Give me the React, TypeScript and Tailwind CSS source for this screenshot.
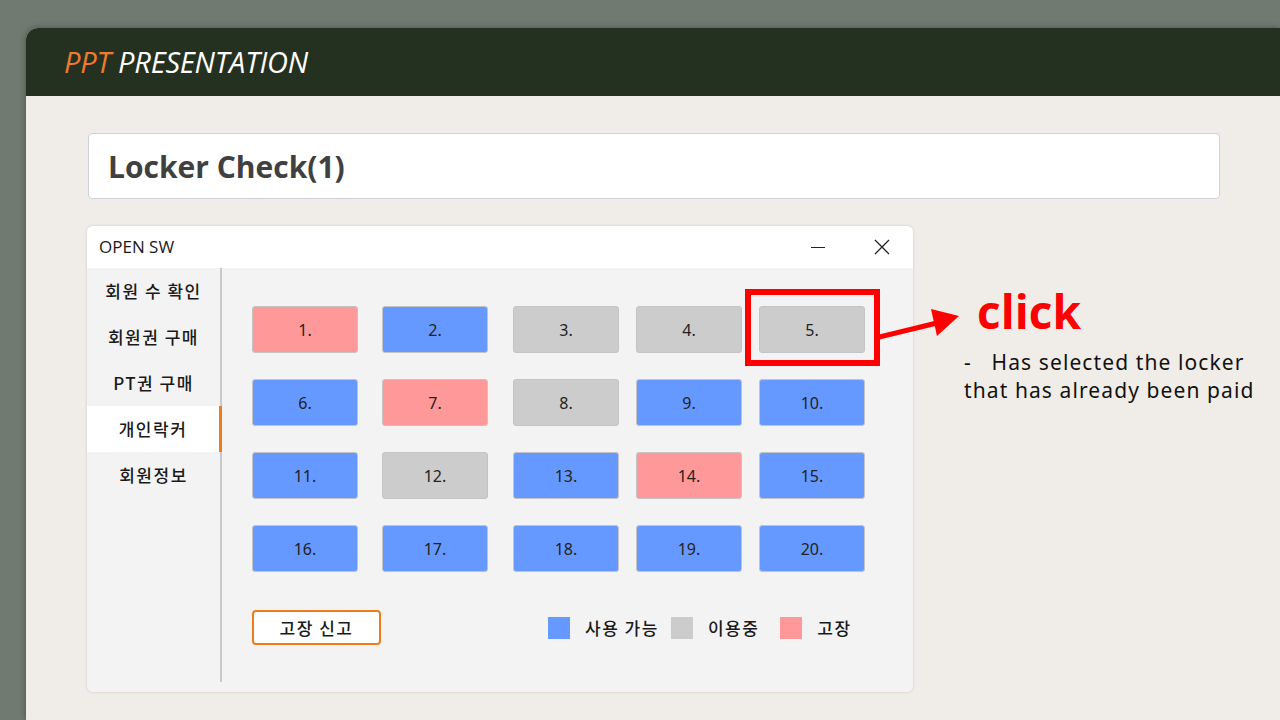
const KR = { fontFamily: '"Noto Sans CJK KR", "Noto Sans", sans-serif' };

type State = "free" | "used" | "broken";

const lockers: State[] = [
  "broken", "free", "used", "used", "used",
  "free", "broken", "used", "free", "free",
  "free", "used", "free", "broken", "free",
  "free", "free", "free", "free", "free",
];

const tone: Record<State, string> = {
  free: "bg-[#6699ff]",
  used: "bg-[#cccccc]",
  broken: "bg-[#ff9999]",
};

const menu = ["회원 수 확인", "회원권 구매", "PT권 구매", "개인락커", "회원정보"];

function TitleBar() {
  return (
    <div className="flex h-[42px] items-center justify-between bg-white pl-3 pr-[22px]">
      <span className="text-[17px] text-[#1a1a1a]" style={{ fontFamily: '"Open Sans", sans-serif' }}>
        OPEN SW
      </span>
      <div className="flex items-center gap-[47px]">
        <svg width="16" height="16" viewBox="0 0 16 16">
          <path d="M1 8.5h14" stroke="#222" strokeWidth="1.2" />
        </svg>
        <svg width="18" height="18" viewBox="0 0 18 18">
          <path d="M2 2l14 14M16 2L2 16" stroke="#222" strokeWidth="1.3" />
        </svg>
      </div>
    </div>
  );
}

function Sidebar() {
  return (
    <div className="flex w-[135px] flex-col border-r-2 border-[#c9c9c9] pb-[10px] mb-[10px]">
      {menu.map((m) => {
        const on = m === "개인락커";
        return (
          <div
            key={m}
            className={`flex h-[46px] items-center justify-center text-[17px] font-medium tracking-[1.5px] text-[#1a1a1a] ${
              on ? "bg-white border-r-[3px] border-[#f07b1a] mr-[-2px]" : ""
            }`}
          >
            {m}
          </div>
        );
      })}
    </div>
  );
}

function Legend({ color, label }: { color: string; label: string }) {
  return (
    <div className="flex items-center">
      <span className={`h-[22px] w-[22px] ${color}`} />
      <span className="ml-[15px] text-[17px] font-medium tracking-[1.5px] text-[#1a1a1a]">{label}</span>
    </div>
  );
}

function LockerPanel() {
  return (
    <div className="flex flex-1 flex-col pl-[30px] pt-[38px]">
      <div className="grid grid-cols-[130px_131px_123px_123px_106px] gap-y-[26px]">
        {lockers.map((s, i) => (
          <div
            key={i}
            className={`flex h-[47px] w-[106px] items-center justify-center rounded-[3px] border border-[#c4c4c4] text-[16px] text-[#222] ${tone[s]}`}
            style={{ fontFamily: '"Noto Sans", sans-serif' }}
          >
            {i + 1}.
          </div>
        ))}
      </div>
      <div className="mt-[38px] flex items-center">
        <button className="h-[35px] w-[129px] rounded-[4px] border-2 border-[#f07b1a] bg-white text-[17px] font-medium tracking-[1.5px] text-[#1a1a1a]">
          고장 신고
        </button>
        <div className="ml-[167px] flex items-center">
          <Legend color="bg-[#6699ff]" label="사용 가능" />
          <div className="ml-[12px]">
            <Legend color="bg-[#cccccc]" label="이용중" />
          </div>
          <div className="ml-[21px]">
            <Legend color="bg-[#ff9999]" label="고장" />
          </div>
        </div>
      </div>
    </div>
  );
}

export default function App() {
  return (
    <div className="h-[720px] w-[1280px] overflow-hidden bg-[#717a70] pl-[26px] pt-[28px]" style={KR}>
      <div className="flex h-full flex-col overflow-hidden rounded-tl-[12px] bg-[#f0ede8] shadow-[0_0_6px_rgba(0,0,0,0.35)]">
        <header className="flex h-[68px] items-center bg-[#243121] pl-[38px]">
          <h1 className="text-[29px] italic tracking-[-0.2px]" style={{ fontFamily: '"Open Sans", sans-serif' }}>
            <span className="text-[#ee7a2e]">PPT</span> <span className="text-white">PRESENTATION</span>
          </h1>
        </header>

        <div className="flex flex-col pl-[62px] pt-[37px]">
          <div className="flex h-[66px] w-[1132px] items-center rounded-[4px] border border-[#d0d0d8] bg-white pl-[19px]">
            <h2 className="text-[30px] font-bold text-[#404040]" style={{ fontFamily: '"Open Sans", sans-serif' }}>
              Locker Check(1)
            </h2>
          </div>

          <div className="mt-[27px] flex">
            <div className="relative ml-[-1px] flex h-[466px] w-[826px] flex-col overflow-hidden rounded-[6px] bg-[#f3f3f3] shadow-[0_0_3px_rgba(0,0,0,0.15)]">
              <TitleBar />
              <div className="flex flex-1">
                <Sidebar />
                <LockerPanel />
              </div>
            </div>

            <div className="relative ml-[64px] flex flex-col pt-[62px]">
              <span className="text-[46px] font-bold leading-none text-[#ff0000]" style={{ fontFamily: '"Open Sans", sans-serif' }}>
                click
              </span>
              <p
                className="ml-[-13px] mt-[14px] text-[21px] leading-[28px] tracking-[1.1px] text-[#111]"
                style={{ fontFamily: '"Noto Sans", sans-serif' }}
              >
                -&nbsp;&nbsp; Has selected the locker
                <br />
                that has already been paid
              </p>

              {/* red highlight box + arrow */}
              <div className="absolute left-[-232px] top-[63px] h-[77px] w-[135px] border-[6px] border-[#ff0000]" />
              <svg className="absolute left-[-98px] top-[78px]" width="84" height="50" viewBox="0 0 84 50">
                <path d="M0 33 L62 18" stroke="#ff0000" strokeWidth="5" />
                <path d="M52 5 L80 12 L58 32 Z" fill="#ff0000" />
              </svg>
            </div>
          </div>
        </div>
      </div>
    </div>
  );
}
